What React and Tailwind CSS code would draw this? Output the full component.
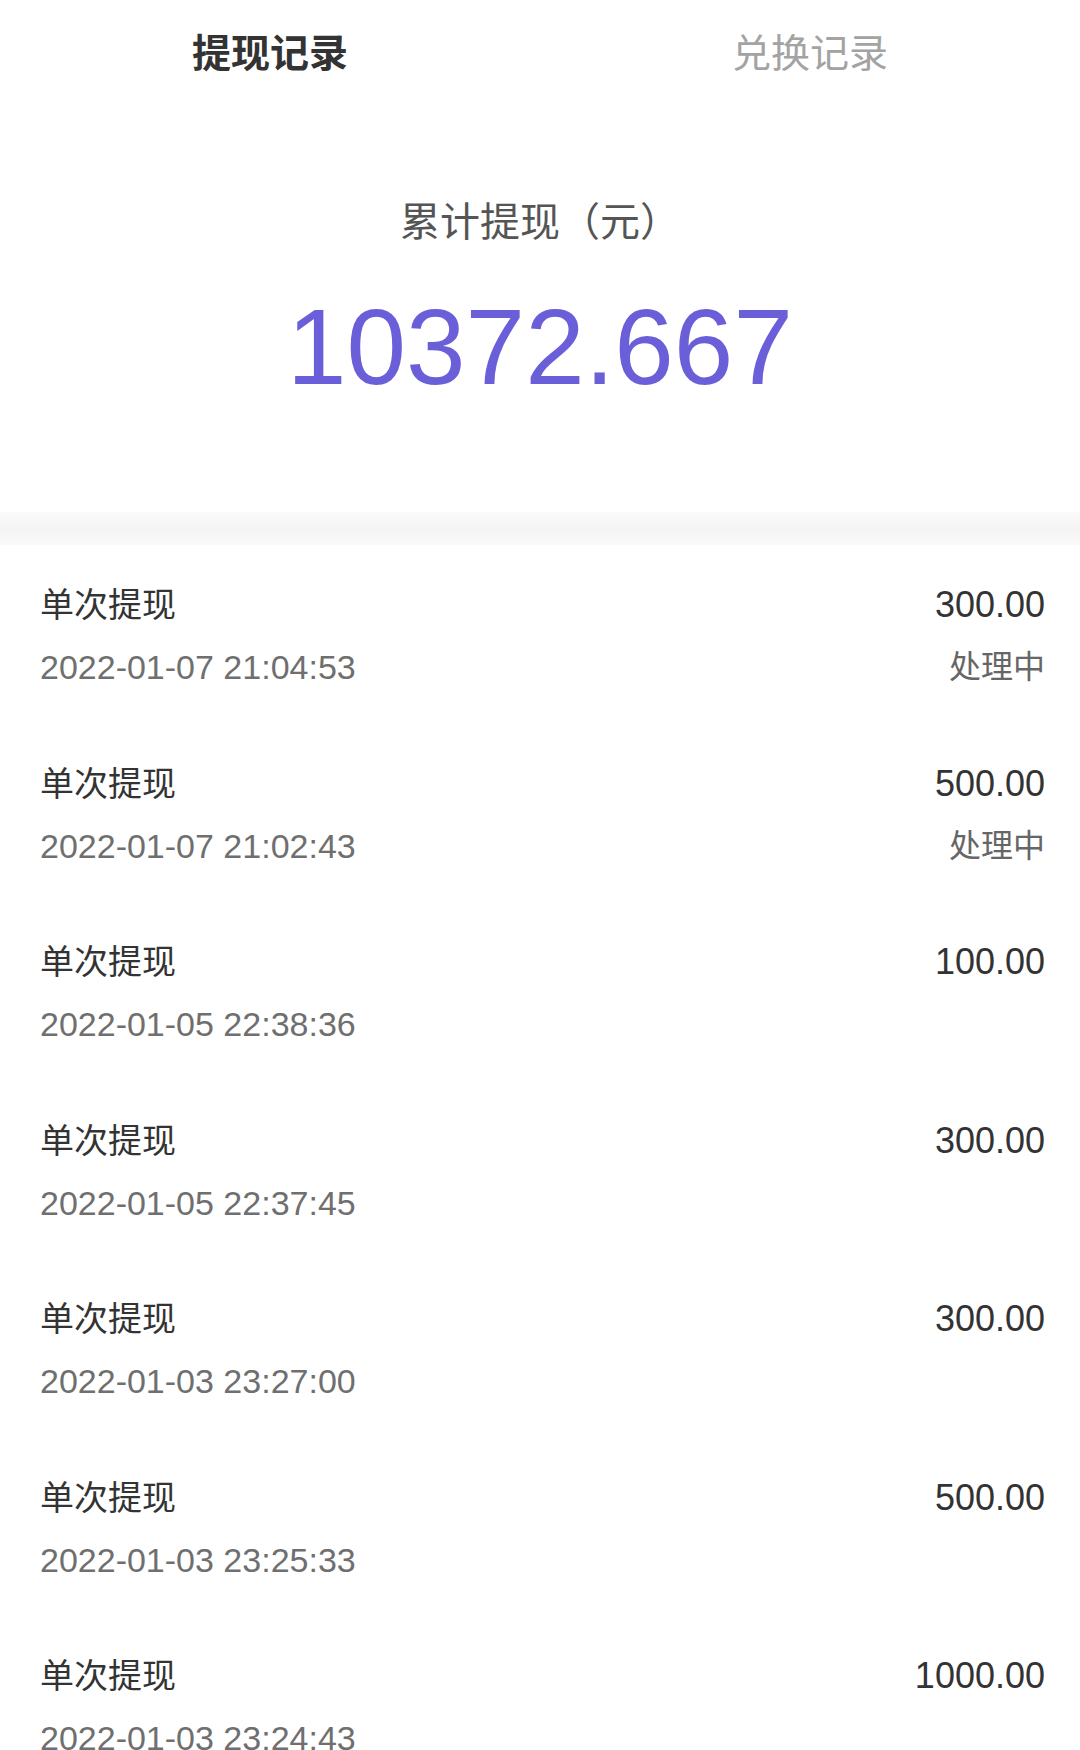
import React from "react";

const rows = [
  { date: "2022-01-07 21:04:53", amount: "300.00", status: "处理中" },
  { date: "2022-01-07 21:02:43", amount: "500.00", status: "处理中" },
  { date: "2022-01-05 22:38:36", amount: "100.00" },
  { date: "2022-01-05 22:37:45", amount: "300.00" },
  { date: "2022-01-03 23:27:00", amount: "300.00" },
  { date: "2022-01-03 23:25:33", amount: "500.00" },
  { date: "2022-01-03 23:24:43", amount: "1000.00" },
];

export default function App() {
  return (
    <div
      className="w-[1080px] h-[1750px] overflow-hidden bg-white"
      style={{ fontFamily: '"Liberation Sans", "Noto Sans CJK SC", sans-serif' }}
    >
      <div className="flex h-[108px]">
        <div className="flex-1 flex items-center justify-center text-[39px] font-bold text-[#333333]">
          提现记录
        </div>
        <div className="flex-1 flex items-center justify-center text-[39px] text-[#a3a3a3]">
          兑换记录
        </div>
      </div>

      <div className="flex flex-col items-center">
        <div className="mt-[89px] h-[50px] leading-[50px] text-[40px] text-[#555555]">
          累计提现（元）
        </div>
        <div className="mt-[40px] h-[120px] leading-[120px] text-[107px] text-[#6b5fd9]">
          10372.667
        </div>
      </div>

      <div className="mt-[105px] h-[33px] bg-gradient-to-b from-[#fbfbfb] via-[#f4f4f4] to-[#fafafa]" />

      <div className="flex flex-col">
        {rows.map((r, i) => (
          <div key={i} className="h-[178.5px] shrink-0 flex justify-between pl-[40px] pr-[35px] pt-[40px]">
            <div className="flex flex-col gap-[22px]">
              <div className="h-[40px] leading-[40px] text-[34px] text-[#333333]">单次提现</div>
              <div className="h-[40px] leading-[40px] text-[34px] text-[#6f6f6f]">{r.date}</div>
            </div>
            <div className="flex flex-col items-end gap-[22px]">
              <div className="h-[40px] leading-[40px] text-[36px] text-[#333333]">{r.amount}</div>
              {r.status && (
                <div className="h-[40px] leading-[40px] text-[32px] text-[#666666]">{r.status}</div>
              )}
            </div>
          </div>
        ))}
      </div>
    </div>
  );
}
